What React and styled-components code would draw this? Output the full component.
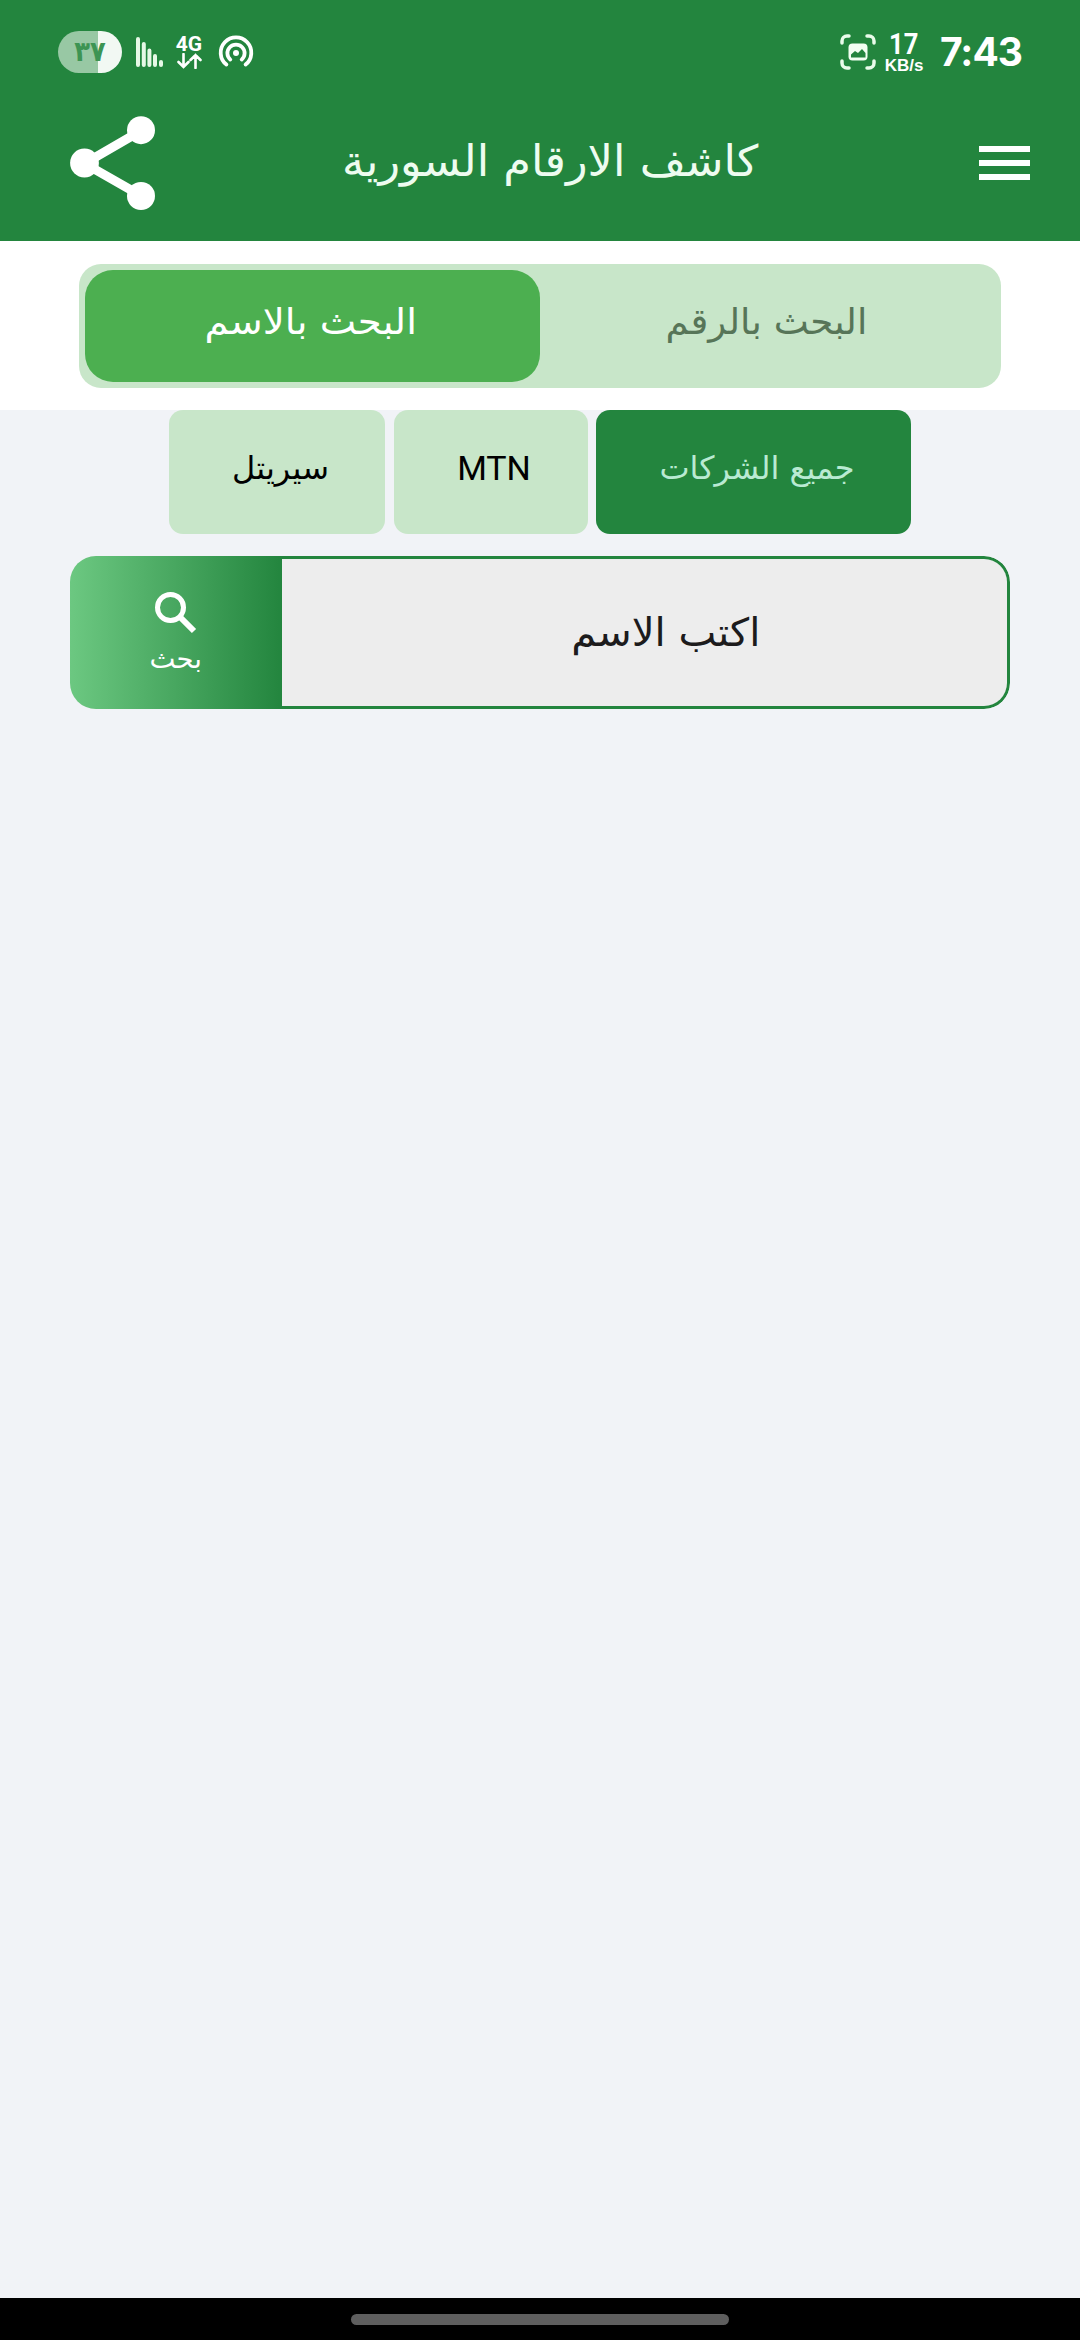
import styled, { createGlobalStyle } from "styled-components";

const App = () => {
  return (
    <>
      <GlobalStyle />
      <Screen>
        <StatusBar>
          <Battery>
            <Digits>٣٧</Digits>
          </Battery>
          <SignalIcon />
          <Network>
            <b>4G</b>
            <ArrowsIcon />
          </Network>
          <HotspotIcon />
          <Spacer />
          <CaptureIcon />
          <Speed>
            <b>17</b>
            <span>KB/s</span>
          </Speed>
          <Time>7:43</Time>
        </StatusBar>
        <Header>
          <IconButton aria-label="share">
            <ShareIcon />
          </IconButton>
          <Title>
            <Label $size={43} $stretch={1.04}>
              كاشف الارقام السورية
            </Label>
          </Title>
          <IconButton aria-label="menu">
            <MenuIcon />
          </IconButton>
        </Header>
        <TabsBar>
          <Tabs>
            <Tab $active>
              <Label $size={36} $stretch={1.075}>
                البحث بالاسم
              </Label>
            </Tab>
            <Tab>
              <Label $size={36} $stretch={1.035}>
                البحث بالرقم
              </Label>
            </Tab>
          </Tabs>
        </TabsBar>
        <Chips>
          <Chip $width={216}>
            <Label $size={32}>سيريتل</Label>
          </Chip>
          <Chip $width={194}>
            <Label $size={34} $latin>
              MTN
            </Label>
          </Chip>
          <Chip $width={315} $active>
            <Label $size={32}>جميع الشركات</Label>
          </Chip>
        </Chips>
        <SearchBox>
          <SearchButton>
            <SearchIcon />
            <Label $size={27} $stretch={1.02}>
              بحث
            </Label>
          </SearchButton>
          <Field>
            <Label $size={39} $stretch={1.03}>
              اكتب الاسم
            </Label>
          </Field>
        </SearchBox>
        <NavBar>
          <Handle />
        </NavBar>
      </Screen>
    </>
  );
};

const SignalIcon = () => (
  <Icon width="27" height="30" viewBox="0 0 27 30" $left={14}>
    <g stroke="#e6f8e6" strokeWidth="4" strokeLinecap="round">
      <path d="M2 2v26M7.800 7v21M13.400 13.500v14.500M19 19v9M25 25v3" />
    </g>
  </Icon>
);

const ArrowsIcon = () => (
  <svg width="25" height="16" viewBox="0 0 25 16" fill="none">
    <path
      d="M6.500 1v12.500M1.500 9l5 5 5-5M18.500 15V2M13.500 7l5-5 5 5"
      stroke="#fff"
      strokeWidth="2.600"
      strokeLinecap="round"
    />
  </svg>
);

const HotspotIcon = () => (
  <Icon width="36" height="34" viewBox="0 0 36 34" fill="none" $left={16}>
    <g stroke="#fff" strokeWidth="3.800" strokeLinecap="round">
      <path d="M8.400 29.600a15.300 15.300 0 1 1 19.200 0" />
      <path d="M12.300 24.600a8.600 8.600 0 1 1 11.400 0" />
    </g>
    <circle cx="18" cy="18" r="3" fill="#fff" />
  </Icon>
);

const CaptureIcon = () => (
  <Icon width="36" height="36" viewBox="0 0 36 36" fill="none">
    <path
      d="M2 9V7a5 5 0 0 1 5-5h2M27 2h2a5 5 0 0 1 5 5v2M34 27v2a5 5 0 0 1-5 5h-2M9 34H7a5 5 0 0 1-5-5v-2"
      stroke="#e9fbea"
      strokeWidth="3.500"
      strokeLinecap="round"
    />
    <rect x="8.500" y="9.500" width="19" height="17" rx="4" fill="#f2fff2" />
    <path d="M11 23.500v-3l4-3.500 3 2 4-4 3.500 4v4.500z" fill="#23853e" />
  </Icon>
);

const ShareIcon = () => (
  <svg width="86" height="94" viewBox="0 0 86 94">
    <path
      d="M71.500 14.500L14.500 47.500l57 32.500"
      fill="none"
      stroke="#fff"
      strokeWidth="9"
    />
    <g fill="#fff">
      <circle cx="71" cy="14.200" r="14" />
      <circle cx="14.500" cy="47" r="14.400" />
      <circle cx="71" cy="80" r="14" />
    </g>
  </svg>
);

const MenuIcon = () => (
  <svg width="51" height="36" viewBox="0 0 51 36" fill="#fff">
    <path d="M0 1h51v6H0zM0 15h51v6H0zM0 29h51v6H0z" />
  </svg>
);

const SearchIcon = () => (
  <svg width="42" height="42" viewBox="0 0 42 42" fill="none" stroke="#fff">
    <circle cx="15.500" cy="15.500" r="13" strokeWidth="5" />
    <path d="M25.500 25.500L39 39" strokeWidth="6" />
  </svg>
);

const GlobalStyle = createGlobalStyle`
  * {
    box-sizing: border-box;
  }
  body {
    margin: 0;
    background-color: #f1f3f7;
    font-family: "DejaVu Sans", sans-serif;
  }
  button {
    border: none;
    padding: 0;
    background: none;
    font: inherit;
    cursor: pointer;
  }
  svg {
    display: block;
    flex-shrink: 0;
  }
`;

const Screen = styled.main`
  display: flex;
  flex-direction: column;
  width: 1080px;
  height: 2340px;
  overflow: hidden;
`;

const StatusBar = styled.div`
  display: flex;
  align-items: center;
  height: 104px;
  padding: 0 58px;
  color: #fff;
  background-color: #23853e;
`;

const Icon = styled.svg`
  margin-left: ${({ $left }) => $left || 0}px;
`;

const Spacer = styled.div`
  flex: 1;
`;

const Battery = styled.div`
  display: flex;
  align-items: center;
  justify-content: center;
  width: 64px;
  height: 42px;
  border-radius: 21px;
  background: linear-gradient(90deg, #98c8a4 0 40px, #f2f8f3 40px);
`;

const Digits = styled.span`
  font-size: 28px;
  font-weight: 700;
  line-height: 1;
  color: #3d9453;
  transform: scaleX(0.92);
`;

const Network = styled.div`
  display: flex;
  flex-direction: column;
  align-items: center;
  width: 26px;
  margin-left: 13px;
  b {
    font: 700 21px/18px Roboto, sans-serif;
  }
`;

const Speed = styled.div`
  display: flex;
  flex-direction: column;
  align-items: center;
  width: 40px;
  margin-left: 8px;
  b {
    font: 700 29px/28px Roboto, sans-serif;
    transform: scaleX(0.88);
  }
  span {
    font: 700 17px/16px "Liberation Sans", sans-serif;
  }
`;

const Time = styled.span`
  margin-left: 16px;
  width: 82px;
  font: 700 39px/38px Inter, sans-serif;
  letter-spacing: -1px;
`;

const Header = styled.header`
  display: flex;
  align-items: flex-start;
  justify-content: space-between;
  height: 137px;
  padding: 12px 50px 0 70px;
  background-color: #23853e;
`;

const IconButton = styled.button`
  display: flex;
  align-items: center;
  height: 94px;
`;

const Title = styled.h1`
  margin: 0;
  padding: 27px 35px 0 0;
  font-weight: 400;
  color: #eefcf0;
`;

const Label = styled.span`
  display: block;
  direction: ${({ $latin }) => ($latin ? "ltr" : "rtl")};
  font-family: ${({ $latin }) => ($latin ? "Roboto" : '"DejaVu Sans"')}, sans-serif;
  font-size: ${({ $size }) => $size}px;
  line-height: 36px;
  white-space: nowrap;
  transform: scaleX(${({ $stretch }) => $stretch || 1});
`;

const TabsBar = styled.div`
  height: 169px;
  padding: 23px 79px;
  background-color: #fff;
`;

const Tabs = styled.div`
  display: flex;
  height: 123.500px;
  padding: 5.500px;
  border-radius: 22px;
  background-color: #c8e6c9;
`;

const Tab = styled.button`
  display: flex;
  justify-content: center;
  flex: 1;
  padding: 34px 2px 0 0;
  border-radius: 28px;
  color: ${({ $active }) => ($active ? "#fff" : "#577558")};
  background-color: ${({ $active }) => ($active ? "#4caf50" : "transparent")};
`;

const Chips = styled.div`
  display: flex;
  justify-content: center;
  gap: 8.500px;
`;

const Chip = styled.button`
  display: flex;
  justify-content: center;
  width: ${({ $width }) => $width}px;
  height: 124px;
  padding: 40px 0 0 7px;
  border-radius: 14px;
  color: ${({ $active }) => ($active ? "#b9ead2" : "#000")};
  background-color: ${({ $active }) => ($active ? "#23853e" : "#c8e6c9")};
`;

const SearchBox = styled.div`
  display: flex;
  width: 940px;
  height: 153px;
  margin: 22px auto auto;
  border-radius: 26px;
  background-color: #ededed;
  overflow: hidden;
`;

const SearchButton = styled.button`
  display: flex;
  flex-direction: column;
  align-items: center;
  gap: 7px;
  width: 212px;
  padding: 36px 0 0;
  color: #fff;
  background: linear-gradient(90deg, #6cc881, #23853e);
`;

const Field = styled.div`
  display: flex;
  justify-content: center;
  flex: 1;
  padding: 56px 0 0 42px;
  border: 3px solid #23853e;
  border-left: none;
  border-radius: 0 26px 26px 0;
  color: #1c1b1c;
`;

const NavBar = styled.div`
  display: flex;
  justify-content: center;
  height: 42px;
  padding-top: 16px;
  background-color: #000;
`;

const Handle = styled.div`
  width: 378px;
  height: 11px;
  border-radius: 6px;
  background-color: #5e5e5e;
`;

export default App;
